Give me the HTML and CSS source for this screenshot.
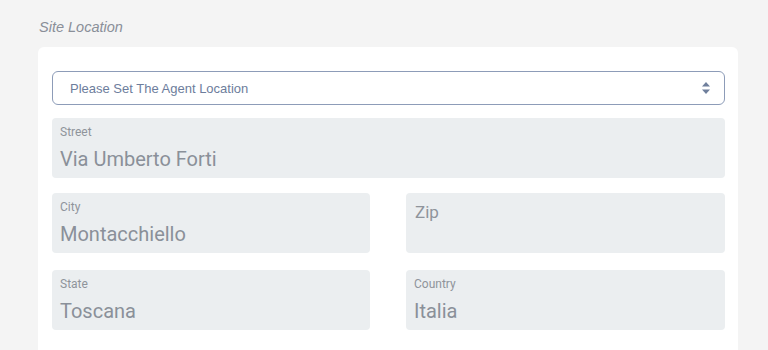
FILE: index.html
```html
<!DOCTYPE html>
<html lang="en">
<head>
<meta charset="utf-8">
<title>Site Location</title>
<link rel="stylesheet" href="styles.css">
</head>
<body>
<div class="page">
  <h2 class="section-title">Site Location</h2>
  <div class="card">
    <div class="select">
      <span class="select-text">Please Set The Agent Location</span>
      <svg class="select-arrows" width="10" height="16" viewBox="0 0 10 16">
        <path d="M1 6.5 L5 2 L9 6.5 Z" fill="#6f7f9c"/>
        <path d="M1 9.5 L5 14 L9 9.5 Z" fill="#6f7f9c"/>
      </svg>
    </div>
    <div class="field">
      <span class="label">Street</span>
      <span class="value">Via Umberto Forti</span>
    </div>
    <div class="grid">
      <div class="field">
        <span class="label">City</span>
        <span class="value">Montacchiello</span>
      </div>
      <div class="field field-empty">
        <span class="placeholder">Zip</span>
      </div>
      <div class="field">
        <span class="label">State</span>
        <span class="value">Toscana</span>
      </div>
      <div class="field">
        <span class="label">Country</span>
        <span class="value">Italia</span>
      </div>
    </div>
  </div>
</div>
</body>
</html>
```

FILE: styles.css
```css
html, body {
  margin: 0;
  padding: 0;
  background: #f4f4f4;
  height: 100%;
  overflow: hidden;
}

.page {
  padding: 18px 30px 0 38px;
}

.section-title {
  margin: 0 0 11px 1px;
  font-family: "Liberation Sans", Arial, sans-serif;
  font-style: italic;
  font-weight: normal;
  font-size: 14.5px;
  line-height: 18px;
  color: #8a8f99;
}

.card {
  width: 700px;
  box-sizing: border-box;
  background: #ffffff;
  border-radius: 6px;
  padding: 24px 13px 20px 14px;
  min-height: 320px;
}

.select {
  height: 34px;
  box-sizing: border-box;
  border: 1px solid #8d9cb8;
  border-radius: 6px;
  display: flex;
  align-items: center;
  justify-content: space-between;
  padding: 0 13px 0 17px;
  margin-bottom: 13px;
}

.select-text {
  font-family: "Liberation Sans", Arial, sans-serif;
  font-size: 13px;
  color: #6d7d9c;
}

.select-arrows {
  display: block;
}

.field {
  height: 60px;
  box-sizing: border-box;
  background: #ebeef0;
  border-radius: 4px;
  padding: 7px 8px 0 8px;
  font-family: Roboto, "Noto Sans", sans-serif;
}

.label {
  display: block;
  font-size: 12px;
  line-height: 14px;
  color: #8f949b;
}

.value {
  display: block;
  margin-top: 8px;
  font-size: 20px;
  line-height: 24px;
  color: #8a9099;
}

.field-empty {
  padding-top: 9px;
  padding-left: 9px;
}

.placeholder {
  display: block;
  font-size: 17px;
  line-height: 20px;
  color: #8f949b;
}

.grid {
  margin-top: 15px;
  display: grid;
  grid-template-columns: 318px 319px;
  column-gap: 36px;
  row-gap: 17px;
}
```
